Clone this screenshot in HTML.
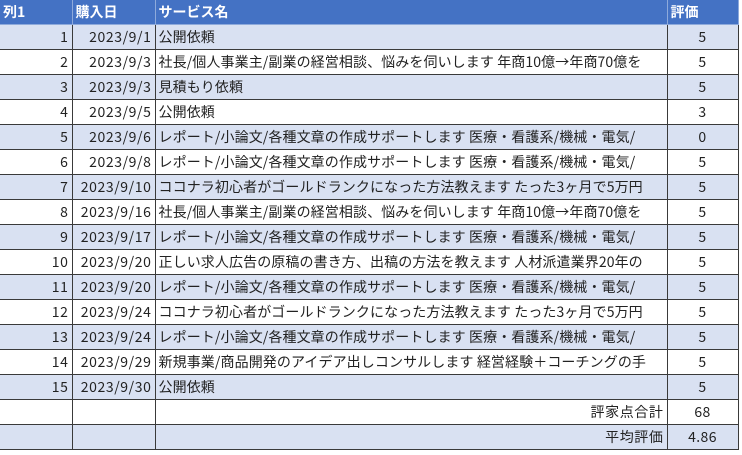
<!DOCTYPE html>
<html><head><meta charset="utf-8"><style>
body{margin:0;width:742px;height:455px;background:#fff;font-family:"Noto Sans CJK JP","Liberation Sans",sans-serif;font-size:14px;overflow:hidden}
table{position:absolute;left:0;top:0;border-collapse:collapse;table-layout:fixed;width:738px}
td{height:24px;padding:0 3px;white-space:nowrap;overflow:hidden;border:1px solid #3a3a3a;color:#222;line-height:24px}
td.t{letter-spacing:0.1px}
tr.h td{background:#4472c4;color:#fff;font-weight:bold;border-color:#8eaadb;border-top:none}
tr.o td{background:#d9e1f2}
td.r{text-align:right;letter-spacing:0.6px}
td.c{text-align:center;letter-spacing:0.4px}
td:first-child{border-left:none}
</style></head><body>
<table>
<colgroup><col style="width:72px"><col style="width:83px"><col style="width:512px"><col style="width:71px"></colgroup>
<tr class="h"><td>列1</td><td>購入日</td><td>サービス名</td><td>評価</td></tr>
<tr class="o"><td class="r">1</td><td class="r">2023/9/1</td><td class="t">公開依頼</td><td class="c">5</td></tr>
<tr><td class="r">2</td><td class="r">2023/9/3</td><td class="t">社長/個人事業主/副業の経営相談、悩みを伺いします 年商10億→年商70億を</td><td class="c">5</td></tr>
<tr class="o"><td class="r">3</td><td class="r">2023/9/3</td><td class="t">見積もり依頼</td><td class="c">5</td></tr>
<tr><td class="r">4</td><td class="r">2023/9/5</td><td class="t">公開依頼</td><td class="c">3</td></tr>
<tr class="o"><td class="r">5</td><td class="r">2023/9/6</td><td class="t">レポート/小論文/各種文章の作成サポートします 医療・看護系/機械・電気/</td><td class="c">0</td></tr>
<tr><td class="r">6</td><td class="r">2023/9/8</td><td class="t">レポート/小論文/各種文章の作成サポートします 医療・看護系/機械・電気/</td><td class="c">5</td></tr>
<tr class="o"><td class="r">7</td><td class="r">2023/9/10</td><td class="t">ココナラ初心者がゴールドランクになった方法教えます たった3ヶ月で5万円</td><td class="c">5</td></tr>
<tr><td class="r">8</td><td class="r">2023/9/16</td><td class="t">社長/個人事業主/副業の経営相談、悩みを伺いします 年商10億→年商70億を</td><td class="c">5</td></tr>
<tr class="o"><td class="r">9</td><td class="r">2023/9/17</td><td class="t">レポート/小論文/各種文章の作成サポートします 医療・看護系/機械・電気/</td><td class="c">5</td></tr>
<tr><td class="r">10</td><td class="r">2023/9/20</td><td class="t">正しい求人広告の原稿の書き方、出稿の方法を教えます 人材派遣業界20年の</td><td class="c">5</td></tr>
<tr class="o"><td class="r">11</td><td class="r">2023/9/20</td><td class="t">レポート/小論文/各種文章の作成サポートします 医療・看護系/機械・電気/</td><td class="c">5</td></tr>
<tr><td class="r">12</td><td class="r">2023/9/24</td><td class="t">ココナラ初心者がゴールドランクになった方法教えます たった3ヶ月で5万円</td><td class="c">5</td></tr>
<tr class="o"><td class="r">13</td><td class="r">2023/9/24</td><td class="t">レポート/小論文/各種文章の作成サポートします 医療・看護系/機械・電気/</td><td class="c">5</td></tr>
<tr><td class="r">14</td><td class="r">2023/9/29</td><td class="t">新規事業/商品開発のアイデア出しコンサルします 経営経験＋コーチングの手</td><td class="c">5</td></tr>
<tr class="o"><td class="r">15</td><td class="r">2023/9/30</td><td class="t">公開依頼</td><td class="c">5</td></tr>
<tr><td></td><td></td><td class="r">評家点合計</td><td class="c">68</td></tr>
<tr class="o"><td></td><td></td><td class="r">平均評価</td><td class="c">4.86</td></tr>
</table>
</body></html>
